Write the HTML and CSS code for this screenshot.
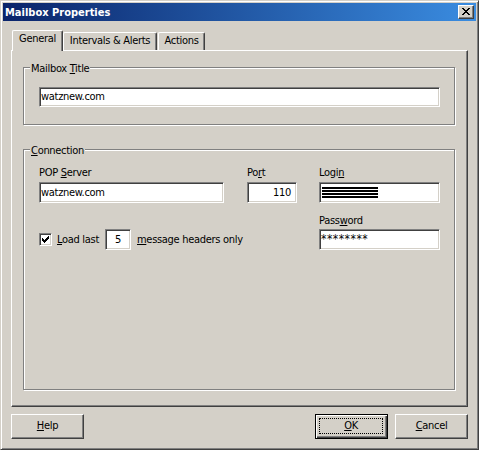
FILE: index.html
```html
<!DOCTYPE html>
<html>
<head>
<meta charset="utf-8">
<link rel="stylesheet" href="styles.css">
</head>
<body>
<div class="window">
  <div class="titlebar">
    <span class="title">Mailbox Properties</span>
    <button class="close" aria-label="Close">
      <svg width="8" height="7" viewBox="0 0 8 7" shape-rendering="crispEdges"><path d="M0 0h2v1h-2zM6 0h2v1h-2zM1 1h2v1h-2zM5 1h2v1h-2zM2 2h4v1h-4zM3 3h2v1h-2zM2 4h4v1h-4zM1 5h2v1h-2zM5 5h2v1h-2zM0 6h2v1h-2zM6 6h2v1h-2z" fill="#000"/></svg>
    </button>
  </div>
  <div class="client">
    <div class="tabs">
      <div class="tab active">General</div>
      <div class="tab t2">Intervals &amp; Alerts</div>
      <div class="tab t3">Actions</div>
    </div>
    <div class="panel">
      <div class="group g1">
        <span class="legend">Mailbox <u>T</u>itle</span>
        <div class="edit wide">watznew.com</div>
      </div>
      <div class="group g2">
        <span class="legend"><u>C</u>onnection</span>
        <div class="conn">
          <div class="field f-pop">
            <span class="lbl">POP <u>S</u>erver</span>
            <div class="edit">watznew.com</div>
          </div>
          <div class="field f-port">
            <span class="lbl">Po<u>r</u>t</span>
            <div class="edit right">110</div>
          </div>
          <div class="field f-login">
            <span class="lbl">Logi<u>n</u></span>
            <div class="edit"><span class="scramble"></span></div>
          </div>
          <div class="checkline">
            <span class="check"><svg width="7" height="7" viewBox="0 0 7 7" shape-rendering="crispEdges"><path d="M6 0h1v1h-1zM5 1h2v1h-2zM0 2h1v1h-1zM4 2h3v1h-3zM0 3h2v1h-2zM3 3h3v1h-3zM0 4h5v1h-5zM1 5h3v1h-3zM2 6h1v1h-1z" fill="#000"/></svg></span>
            <span class="ll"><u>L</u>oad last</span>
            <div class="edit num">5</div>
            <span class="msg"><u>m</u>essage headers only</span>
          </div>
          <div class="field f-pass">
            <span class="lbl">Pass<u>w</u>ord</span>
            <div class="edit pass">********</div>
          </div>
        </div>
      </div>
    </div>
    <div class="buttons">
      <button class="btn"><span class="cap"><u>H</u>elp</span></button>
      <span class="spacer"></span>
      <button class="btn default"><span class="focus"><u>O</u>K</span></button>
      <button class="btn cancel"><span class="cap"><u>C</u>ancel</span></button>
    </div>
  </div>
</div>
</body>
</html>
```

FILE: styles.css
```css
* { box-sizing: border-box; }

body {
  margin: 0;
  background: #D4D0C8;
  font: 11px "DejaVu Sans Condensed", "Liberation Sans", Arial, sans-serif;
  letter-spacing: -0.3px;
  color: #000;
}

u { text-decoration: underline; text-underline-offset: 1px; }

.window {
  width: 479px;
  height: 450px;
  background: #D4D0C8;
  border: 1px solid;
  border-color: #D4D0C8 #404040 #404040 #D4D0C8;
  box-shadow: inset 1px 1px 0 #fff, inset -1px -1px 0 #808080;
  padding: 2px;
  display: flex;
  flex-direction: column;
}

.titlebar {
  height: 18px;
  flex: none;
  background: linear-gradient(to right, #0A246A, #3A8CE0);
  color: #fff;
  font-weight: bold;
  letter-spacing: 0;
  display: flex;
  align-items: center;
  justify-content: space-between;
  padding: 0 2px;
}

.title { line-height: 13px; }

.close {
  width: 16px;
  height: 14px;
  padding: 0;
  margin: 0;
  background: #D4D0C8;
  border: 1px solid;
  border-color: #fff #404040 #404040 #fff;
  box-shadow: inset -1px -1px 0 #808080;
  display: flex;
  align-items: center;
  justify-content: center;
}

.close svg { display: block; margin-left: -1px; margin-top: -1px; }

.client {
  flex: 1;
  padding: 11px 8px 0 8px;
}

.tabs {
  display: flex;
  align-items: flex-end;
  height: 18px;
  padding-left: 1px;
}

.tab {
  height: 18px;
  border-top: 1px solid #fff;
  border-left: 1px solid #fff;
  border-right: 1px solid #404040;
  box-shadow: inset -1px 0 0 #808080;
  border-radius: 2px 2px 0 0;
  text-align: center;
  line-height: 16px;
  white-space: nowrap;
  background: #D4D0C8;
}

.tab.active {
  width: 51px;
  height: 21px;
  margin-bottom: -1px;
  position: relative;
  z-index: 1;
}

.t2 { width: 94px; }
.t3 { width: 47px; margin-left: 1px; }

.panel {
  width: 457px;
  height: 357px;
  border: 1px solid;
  border-color: #fff #404040 #404040 #fff;
  box-shadow: inset -1px -1px 0 #808080;
  padding: 16px 12px 0 11px;
}

.group {
  position: relative;
  border: 1px solid #808080;
  box-shadow: inset 1px 1px 0 #fff, 1px 1px 0 #fff;
}

.legend {
  position: absolute;
  top: -6px;
  left: 6px;
  padding: 0 1px;
  line-height: 13px;
  background: #D4D0C8;
}

.g1 {
  height: 58px;
  padding: 19px 15px 0;
}

.g2 {
  height: 241px;
  margin-top: 24px;
  padding: 16px 14px 0 15px;
}

.edit {
  height: 21px;
  background: #fff;
  border: 1px solid;
  border-color: #808080 #fff #fff #808080;
  box-shadow: inset 1px 1px 0 #404040, inset -1px -1px 0 #D4D0C8;
  padding: 0 1px;
  line-height: 19px;
  white-space: nowrap;
  overflow: hidden;
}

.edit.wide {
  width: 401px;
  height: 20px;
  line-height: 18px;
}

.conn {
  display: grid;
  grid-template-columns: 185px 23px 50px 22px 121px;
}

.lbl {
  display: block;
  line-height: 13px;
  margin-bottom: 3px;
}

.f-pop { grid-column: 1; grid-row: 1; }
.f-port { grid-column: 3; grid-row: 1; }
.f-login { grid-column: 5; grid-row: 1; }

.f-pass { grid-column: 5; grid-row: 2; margin-top: 11px; }
.f-pass .lbl { margin-bottom: 2px; }

.edit.right { text-align: right; padding-right: 5px; }

.edit.pass { font-size: 12px; letter-spacing: 0.5px; }

.scramble {
  display: inline-block;
  vertical-align: top;
  margin-top: 4px;
  margin-left: 1px;
  width: 56px;
  height: 11px;
  background: repeating-linear-gradient(to bottom, #000 0 2px, #fff 2px 3px);
}

.checkline {
  grid-column: 1 / 5;
  grid-row: 2;
  align-self: end;
  height: 21px;
  display: flex;
  align-items: center;
}

.check {
  width: 13px;
  height: 13px;
  background: #fff;
  border: 1px solid;
  border-color: #808080 #fff #fff #808080;
  box-shadow: inset 1px 1px 0 #404040, inset -1px -1px 0 #D4D0C8;
  display: flex;
  align-items: center;
  justify-content: center;
  margin-right: 5px;
}

.check svg { display: block; }

.ll { width: 48px; line-height: 13px; white-space: nowrap; }

.edit.num {
  width: 26px;
  text-align: center;
}

.msg { margin-left: 6px; line-height: 13px; white-space: nowrap; }

.buttons {
  display: flex;
  margin-top: 7px;
}

.spacer { flex: 1; }

.btn {
  width: 73px;
  height: 25px;
  margin: 0;
  background: #D4D0C8;
  border: 1px solid;
  border-color: #fff #404040 #404040 #fff;
  box-shadow: inset -1px -1px 0 #808080;
  font: inherit;
  letter-spacing: inherit;
  color: #000;
  padding: 0 0 2px 0;
  display: flex;
  align-items: center;
  justify-content: center;
}

.cap { line-height: 13px; }

.btn.default {
  border-color: #000;
  box-shadow: inset 1px 1px 0 #fff, inset -1px -1px 0 #404040, inset -2px -2px 0 #808080;
  padding: 3px 4px 4px 3px;
}

.focus {
  flex: 1;
  align-self: stretch;
  border: 1px dotted #000;
  display: flex;
  align-items: center;
  justify-content: center;
  padding-bottom: 1px;
  line-height: 13px;
}

.cancel { margin-left: 7px; }
```
